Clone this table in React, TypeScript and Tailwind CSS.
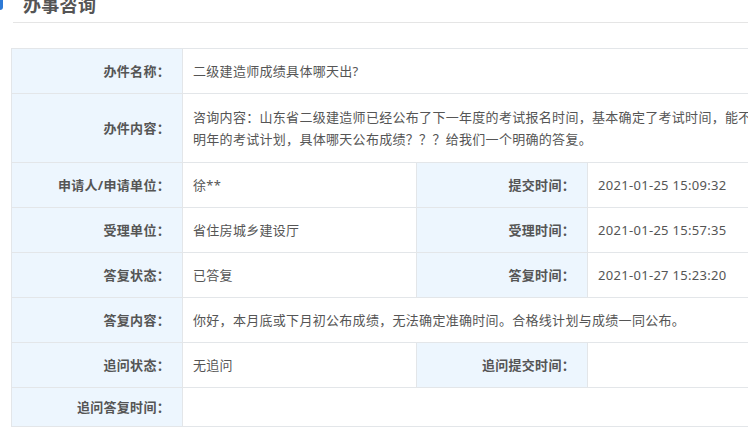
import React from 'react'

const label = 'bg-[#edf6fe] text-right font-bold text-[#555] pr-[12px] border border-[#e3e6e9]'
const value = 'text-left text-[#555] pl-[10px] border border-[#e3e6e9]'

export default function App() {
  return (
    <div
      className="w-full h-[446px] overflow-hidden bg-white text-[13px] tracking-[0.3px]"
      style={{ fontFamily: '"Noto Sans", "Noto Sans CJK SC", "Microsoft YaHei", sans-serif' }}
    >
      <div className="w-[1100px]">
        {/* header */}
        <div className="flex items-center h-[28px] -mt-[9px] pl-[23px] relative">
          <div className="absolute left-[-10px] top-[6px] w-[13px] h-[13px] rounded-[3px] bg-[#2d7ad6]" />
          <h2 className="text-[18px] font-bold text-[#555] leading-[28px]">办事咨询</h2>
        </div>
        <div className="ml-[13px] mt-[3px] h-px bg-[#e5e5e5]" />

        {/* detail table */}
        <table className="ml-[11px] mt-[25px] w-[1000px] table-fixed border-collapse leading-[24px]">
          <colgroup>
            <col className="w-[171px]" />
            <col className="w-[234px]" />
            <col className="w-[171px]" />
            <col />
          </colgroup>
          <tbody>
            <tr>
              <td className={`${label} py-[10px]`}>办件名称：</td>
              <td className={`${value} py-[10px]`} colSpan={3}>二级建造师成绩具体哪天出?</td>
            </tr>
            <tr>
              <td className={`${label} py-[10px]`}>办件内容：</td>
              <td className={`${value} py-[12px] leading-[22px]`} colSpan={3}>
                <div className="whitespace-nowrap">
                  咨询内容：山东省二级建造师已经公布了下一年度的考试报名时间，基本确定了考试时间，能不能参照往年的时间，结合
                </div>
                <div className="whitespace-nowrap">明年的考试计划，具体哪天公布成绩？？？给我们一个明确的答复。</div>
              </td>
            </tr>
            <tr>
              <td className={`${label} py-[10px]`}>申请人/申请单位：</td>
              <td className={`${value} py-[10px]`}>徐**</td>
              <td className={`${label} py-[10px]`}>提交时间：</td>
              <td className={`${value} py-[10px]`}>2021-01-25 15:09:32</td>
            </tr>
            <tr>
              <td className={`${label} py-[10px]`}>受理单位：</td>
              <td className={`${value} py-[10px]`}>省住房城乡建设厅</td>
              <td className={`${label} py-[10px]`}>受理时间：</td>
              <td className={`${value} py-[10px]`}>2021-01-25 15:57:35</td>
            </tr>
            <tr>
              <td className={`${label} py-[10px]`}>答复状态：</td>
              <td className={`${value} py-[10px]`}>已答复</td>
              <td className={`${label} py-[10px]`}>答复时间：</td>
              <td className={`${value} py-[10px]`}>2021-01-27 15:23:20</td>
            </tr>
            <tr>
              <td className={`${label} py-[10px]`}>答复内容：</td>
              <td className={`${value} py-[10px]`} colSpan={3}>
                你好，本月底或下月初公布成绩，无法确定准确时间。合格线计划与成绩一同公布。
              </td>
            </tr>
            <tr>
              <td className={`${label} py-[10px]`}>追问状态：</td>
              <td className={`${value} py-[10px]`}>无追问</td>
              <td className={`${label} py-[10px]`}>追问提交时间：</td>
              <td className={`${value} py-[10px]`}></td>
            </tr>
            <tr>
              <td className={`${label} py-[7px]`}>追问答复时间：</td>
              <td className={`${value} py-[7px]`} colSpan={3}></td>
            </tr>
          </tbody>
        </table>
      </div>
    </div>
  )
}
